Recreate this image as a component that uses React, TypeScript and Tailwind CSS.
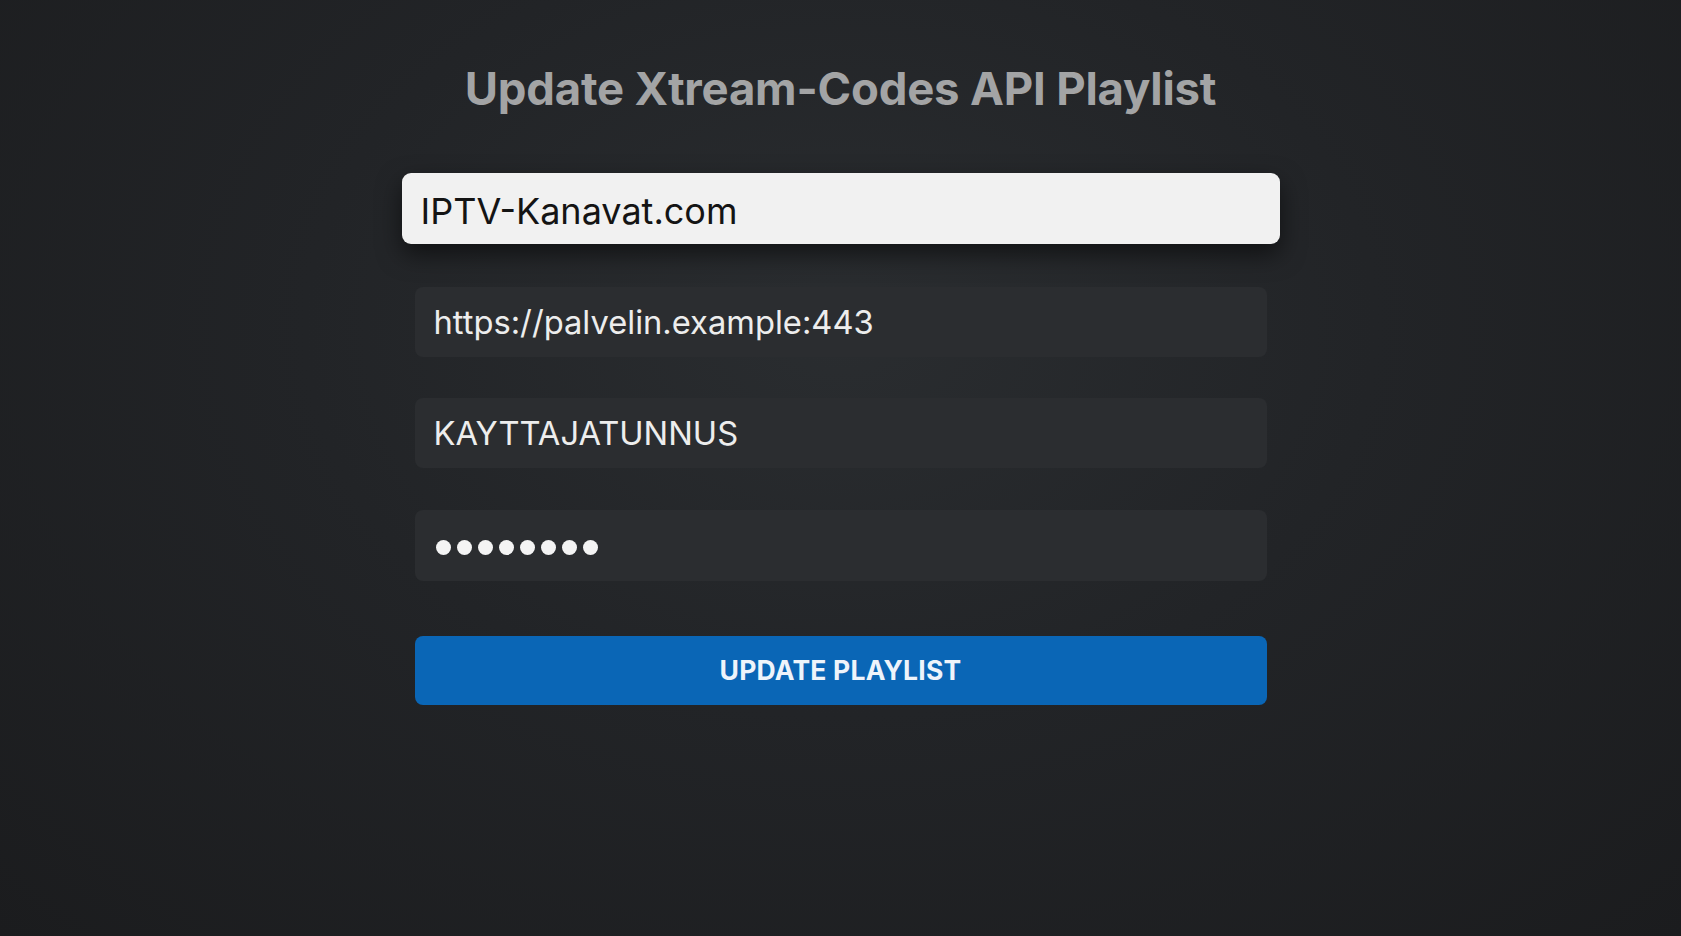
import React from "react";

export default function App() {
  const dots = [0, 1, 2, 3, 4, 5, 6, 7];
  return (
    <div className="h-[936px] w-full overflow-hidden bg-[radial-gradient(ellipse_at_50%_35%,#2a2d30_0%,#222427_45%,#1b1c1e_100%)] font-['Inter',sans-serif]">
      <div className="flex flex-col items-center pt-[66px]">
        <h1 className="text-[45.5px] font-bold leading-none tracking-[-0.2px] text-[#a3a4a5]">
          Update Xtream-Codes API Playlist
        </h1>
        <div className="mt-[61px] flex w-[852px] flex-col">
          <div className="-mx-[13px] flex h-[71px] items-center rounded-[9px] bg-[#f1f1f1] pl-[19px] pt-[5px] text-[36px] text-[#141414] shadow-[0_10px_24px_rgba(0,0,0,0.55)]">
            IPTV-Kanavat.com
          </div>
          <div className="mt-[43px] flex h-[70px] items-center rounded-[8px] bg-[#2b2d30] pl-[19px] pt-[2px] text-[32.7px] text-[#ededed]">
            https://palvelin.example:443
          </div>
          <div className="mt-[41px] flex h-[70px] items-center rounded-[8px] bg-[#2b2d30] pl-[19px] pt-[2px] text-[32.7px] text-[#ededed]">
            KAYTTAJATUNNUS
          </div>
          <div className="mt-[42px] flex h-[71px] items-center gap-[6px] rounded-[8px] bg-[#2b2d30] pl-[21px] pt-[4px]">
            {dots.map((d) => (
              <span key={d} className="block h-[15px] w-[15px] rounded-full bg-[#f4f4f4]" />
            ))}
          </div>
          <button className="mt-[55px] flex h-[69px] items-center justify-center rounded-[8px] bg-[#0a66b6] pt-[2px] text-[26.5px] font-bold tracking-[0.2px] text-[#eef4fb]">
            UPDATE PLAYLIST
          </button>
        </div>
      </div>
    </div>
  );
}
